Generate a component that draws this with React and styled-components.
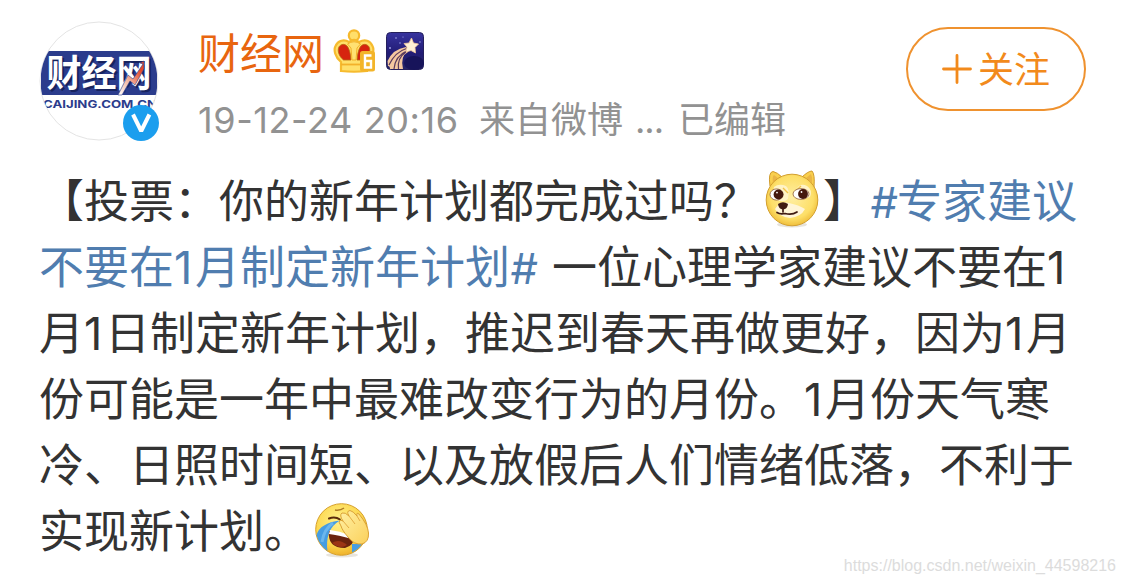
import React from 'react';
import styled, { createGlobalStyle } from 'styled-components';

const GlobalStyle = createGlobalStyle`
  body {
    margin: 0;
    background: #fff;
    font-family: Inter, "Noto Sans CJK SC", sans-serif;
    text-spacing-trim: space-all;
  }
`;

const Avatar = () => (
  <AvatarSvg viewBox="0 0 120 120">
    <defs>
      <clipPath id="face"><circle cx="60" cy="60" r="58.5" /></clipPath>
      <linearGradient id="bolt" x1="0" y1="1" x2="1" y2="0">
        <stop offset="0" stopColor="#fff" />
        <stop offset="0.4" stopColor="#f3b7a2" />
        <stop offset="0.8" stopColor="#e2492c" />
      </linearGradient>
    </defs>
    <circle cx="60" cy="60" r="59" fill="#fff" stroke="#e4e4e4" />
    <g clipPath="url(#face)">
      <rect x="2" y="30" width="116" height="44" fill="#2b3c8c" />
      <text x="9.5" y="68" fontSize="37" fontWeight="700" fill="#17235e" textLength="105" lengthAdjust="spacingAndGlyphs">财经网</text>
      <text x="7.5" y="66" fontSize="37" fontWeight="700" fill="#fff" textLength="105" lengthAdjust="spacingAndGlyphs">财经网</text>
      <path d="M79 74 L89 54 L94 58 L104 43 L101 42 L105 40 L105 48 L96 64 L91 60 L83 74 Z" fill="url(#bolt)" stroke="#2b3c8c" strokeWidth="0.6" />
      <text x="4" y="86.5" fontSize="10.5" fontWeight="700" fill="#2b3c8c" textLength="114" lengthAdjust="spacingAndGlyphs">CAIJING.COM.CN</text>
    </g>
  </AvatarSvg>
);

const Verified = () => (
  <VerifiedSvg viewBox="0 0 36 36">
    <circle cx="18" cy="18" r="18" fill="#1b9eee" />
    <path d="M10 9.5 L18.2 26 L26.4 9.5" fill="none" stroke="#fff" strokeWidth="4" strokeLinejoin="bevel" />
  </VerifiedSvg>
);

const Crown = () => (
  <CrownSvg viewBox="0 0 42 44">
    <circle cx="21" cy="6.5" r="5.2" fill="#ffdf6a" stroke="#f6b92c" strokeWidth="2.2" />
    <path d="M8 42 L8 33 C2 28 0.5 21 2.5 17 C5 11.5 11 10 16 13 Q21 9 26 13 C32 10 37 11.5 39.5 17 C41.5 21 40 28 34 33 L34 42 Q21 43.5 8 42 Z" fill="#ffe06a" stroke="#f6bb2e" strokeWidth="2.2" />
    <path d="M10.5 31 C4 26 3.5 17 9 15.5 C14 14.5 17 19 18 31 Z" fill="#d6240f" stroke="#b8690f" strokeWidth="0.8" />
    <path d="M31.5 31 C38 26 38.5 17 33 15.5 C28 14.5 25 19 24 31 Z" fill="#d6240f" stroke="#b8690f" strokeWidth="0.8" />
    <path d="M14.5 15 Q21 10.5 27.5 15 L24 19 L23 31 H19 L18 19 Z" fill="#ffe172" stroke="#f3b12a" />
    <path d="M8 35.5 H28" fill="none" stroke="#f3b12a" strokeWidth="1.8" />
    <rect x="27" y="22" width="15" height="20.5" rx="2.5" fill="#f3b52a" />
    <path d="M38.5 26.5 H32 V38.5 H38 V32 H32" fill="none" stroke="#fff" strokeWidth="2.4" />
  </CrownSvg>
);

const StarBadge = () => (
  <StarSvg viewBox="0 0 38 38">
    <defs>
      <linearGradient id="night" x1="0" y1="0" x2="0" y2="1">
        <stop offset="0" stopColor="#38349f" />
        <stop offset="0.55" stopColor="#221c75" />
        <stop offset="1" stopColor="#252565" />
      </linearGradient>
    </defs>
    <rect x="0.5" y="0.5" width="37" height="37" rx="4" fill="url(#night)" stroke="#25205c" />
    <ellipse cx="28" cy="31" rx="10" ry="7" fill="#17145a" />
    <path d="M1.5 29 Q7 17 20 15 L22 20 Q14 24 17 37 H4 Q4 34 2 34 Z" fill="#f4c8a0" />
    <path d="M3 33 Q9 20 20.5 16.5 M8 37 Q9 24 21.5 18.5 M12.5 37 Q11 26 20 20" fill="none" stroke="#5a3a5c" strokeWidth="1.2" />
    <path d="M25.5 6 L27.5 11 L32.5 12 L29 15.5 L29.5 21 L25 18.5 L20 20 L21 15 L18 11.5 L23 11 Z" fill="#fff0d4" stroke="#f4c89c" strokeWidth="0.8" />
    <g fill="#aaaef0">
      <circle cx="10" cy="6" r="0.8" />
      <circle cx="17" cy="5" r="0.6" />
      <circle cx="4" cy="16" r="0.9" />
      <circle cx="14" cy="11" r="0.7" />
      <circle cx="34" cy="10" r="0.7" />
    </g>
  </StarSvg>
);

const Doge = () => (
  <Emoji viewBox="0 0 54 58" $top={-7}>
    <defs>
      <radialGradient id="fur" cx="0.5" cy="0.45" r="0.55">
        <stop offset="0" stopColor="#ffeea2" />
        <stop offset="0.75" stopColor="#fddf68" />
        <stop offset="1" stopColor="#f0bf3c" />
      </radialGradient>
    </defs>
    <ellipse cx="27" cy="54.5" rx="15" ry="3" fill="#e6e3dc" />
    <path d="M5 16 Q3 2 8 1.5 Q12 2 18 8 Z M36 8 Q43 1 47 1 Q50 4 49 17 Z" fill="#f9cf4d" stroke="#cf9a2c" />
    <path d="M8 13 Q7 6 9 5 L14 9 Z M41 8 L46 4 Q48 8 47 13 Z" fill="#eab545" />
    <circle cx="27" cy="30" r="25.8" fill="url(#fur)" stroke="#d3a02e" />
    <path d="M9 17 Q14 13 21 16 Q25 19 23 29 Q18 34 8 28 Z M31 20 Q35 12 42 16 Q48 20 45 27 Q36 31 30 26 Z" fill="#fff3c5" />
    <path d="M10 39 Q15 31 24 33 Q34 35 40 39 Q36 47 25 48 Q14 47 10 39" fill="#fff5d8" />
    <path d="M18 18 L23 23 M30 22 L36 16" stroke="#f1c24a" strokeWidth="1.4" fill="none" />
    <ellipse cx="11.5" cy="24.5" rx="6.5" ry="5.6" fill="#fff" stroke="#8b5a35" strokeWidth="0.8" />
    <ellipse cx="36" cy="24" rx="8" ry="5.4" fill="#fff" stroke="#8b5a35" strokeWidth="0.8" />
    <circle cx="13.5" cy="24.5" r="4.9" fill="#45190e" />
    <circle cx="38" cy="24" r="4.9" fill="#45190e" />
    <circle cx="12" cy="22.6" r="0.9" fill="#fff" />
    <circle cx="36.5" cy="22" r="0.9" fill="#fff" />
    <path d="M13 34 Q18 30.5 23 34 Q22.5 39 18 39.5 Q13.5 39 13 34" fill="#401b12" />
    <path d="M18 38 V42 M12 42.5 Q15 44.5 20 43.5 Q27 45.5 32 42" fill="none" stroke="#401b12" strokeWidth="1.7" strokeLinecap="round" />
  </Emoji>
);

const Facepalm = () => (
  <Emoji viewBox="0 0 54 58" $top={-3}>
    <defs>
      <radialGradient id="skin" cx="0.45" cy="0.35" r="0.65">
        <stop offset="0" stopColor="#fff08a" />
        <stop offset="0.7" stopColor="#fcd74e" />
        <stop offset="1" stopColor="#efb22c" />
      </radialGradient>
      <linearGradient id="palm" x1="0" y1="0" x2="1" y2="1">
        <stop offset="0" stopColor="#fff0a4" />
        <stop offset="1" stopColor="#fbd05a" />
      </linearGradient>
    </defs>
    <ellipse cx="27" cy="53" rx="16" ry="2.5" fill="#e8e5de" />
    <circle cx="26.5" cy="27.5" r="25.8" fill="url(#skin)" stroke="#d6a02b" />
    <path d="M14 16.5 Q20 14 25 17.5" fill="none" stroke="#5b2b0c" strokeWidth="2" strokeLinecap="round" />
    <path d="M20 8 Q25 9 29 6" fill="none" stroke="#b07d25" strokeWidth="1.5" />
    <path d="M25 18.5 Q17 23 14 31 Q11 40 12.5 49 Q4 43 1.5 33 Q5 21 25 18.5" fill="#469de2" />
    <path d="M18 21 Q9 27 7 40" fill="none" stroke="#6bb6ec" strokeWidth="3" />
    <path d="M37 42 L47 42 Q44 47 37 50.5 Z" fill="#469de2" />
    <path d="M14 29 Q23 32 38 35 Q40 43 30 46 Q12 46 14 29" fill="#6a240e" />
    <path d="M15 28 Q25 29 34 33 L37 37 Q23 33 14 32 Z" fill="#fff" />
    <path d="M17 41 Q24 36 32 43 Q25 48 17 41" fill="#9b3515" />
    <path d="M26 24 Q23 20 25 18 L28 19 Q24 13 27 11 Q30 10 34 14 Q31 9 35 8.5 Q38 9 42 14 Q41 10 44 12 Q53 23 53.5 31 Q54 40 47 42 Q39 43 33 35 Q27 28 26 24 Z" fill="url(#palm)" stroke="#dba236" strokeWidth="1" />
    <path d="M28 19 L34 26 M34 14 L40 22 M42 14 L45 19" fill="none" stroke="#e3ac44" />
  </Emoji>
);

const App = () => (
  <Card>
    <GlobalStyle />
    <Header>
      <AvatarWrap>
        <Avatar />
        <Verified />
      </AvatarWrap>
      <Info>
        <NameRow>
          <Name>财经网</Name>
          <Crown />
          <StarBadge />
        </NameRow>
        <Meta>
          <Time>19-12-24 20:16</Time>
          <Source>来自微博</Source>
          <Dots>...</Dots>
          <Edited>已编辑</Edited>
        </Meta>
      </Info>
      <Follow>
        <svg width="30" height="30" viewBox="0 0 30 30">
          <path d="M15 1.5 V28.5 M1.5 15 H28.5" stroke="#f28a1c" strokeWidth="2.8" strokeLinecap="round" />
        </svg>
        <FollowText>关注</FollowText>
      </Follow>
    </Header>
    <Post>
      <Line>【投票：你的新年计划都完成过吗？<Doge />】<Topic $left={2}><Hash>#</Hash>专家建议</Topic></Line>
      <Line><Topic>不要在<Num>1</Num>月制定新年计划<Hash>#</Hash></Topic><Rest>一位心理学家建议不要在<Num>1</Num></Rest></Line>
      <Line>月<Num>1</Num>日制定新年计划，推迟到春天再做更好，因为<Num>1</Num>月</Line>
      <Line>份可能是一年中最难改变行为的月份。<Num>1</Num>月份天气寒</Line>
      <Line>冷、日照时间短、以及放假后人们情绪低落，不利于</Line>
      <Line>实现新计划。<Facepalm /></Line>
    </Post>
    <Watermark>https://blog.csdn.net/weixin_44598216</Watermark>
  </Card>
);

const Card = styled.div`
  position: relative;
  box-sizing: border-box;
  width: 1125px;
  height: 585px;
  padding: 21px 39px 0;
  overflow: hidden;
  background: #fff;
`;

const Header = styled.div`
  display: flex;
  height: 148px;
`;

const AvatarWrap = styled.div`
  position: relative;
  width: 120px;
  height: 120px;
`;

const AvatarSvg = styled.svg`
  display: block;
  width: 120px;
  height: 120px;
`;

const VerifiedSvg = styled.svg`
  position: absolute;
  right: 0;
  bottom: 0;
  width: 36px;
  height: 36px;
`;

const Info = styled.div`
  flex: 1;
  margin-left: 39px;
`;

const NameRow = styled.div`
  display: flex;
  align-items: center;
  height: 60px;
`;

const Name = styled.div`
  padding-top: 5px;
  font-size: 42px;
  line-height: 60px;
  color: #e8650f;
`;

const CrownSvg = styled.svg`
  width: 42px;
  height: 44px;
  margin-left: 9px;
`;

const StarSvg = styled.svg`
  width: 38px;
  height: 38px;
  margin-left: 11px;
`;

const Meta = styled.div`
  display: flex;
  height: 50px;
  margin-top: 14px;
  font-size: 36px;
  line-height: 50px;
  color: #929292;
  white-space: nowrap;
`;

const Time = styled.div`
  width: 281px;
  letter-spacing: 0.6px;
`;

const Source = styled.div`
  width: 156px;
`;

const Dots = styled.div`
  width: 43px;
  letter-spacing: -1px;
`;

const Edited = styled.div``;

const Follow = styled.div`
  display: flex;
  box-sizing: border-box;
  align-items: center;
  justify-content: center;
  gap: 6px;
  width: 180px;
  height: 84px;
  margin-top: 6px;
  border: 2px solid #ef922f;
  border-radius: 42px;
  color: #f28a1c;
  font-size: 36px;
`;

const FollowText = styled.span`
  padding-bottom: 5px;
`;

const Post = styled.div`
  color: #333;
  font-size: 45px;
`;

const Line = styled.div`
  display: flex;
  align-items: center;
  height: 66px;
  line-height: 66px;
  white-space: nowrap;
`;

const Topic = styled.span`
  margin-left: ${props => props.$left || 0}px;
  color: #507daf;
`;

const Rest = styled.span`
  margin-left: 15px;
`;

const Num = styled.span`
  display: inline-block;
  width: 21px;
`;

const Hash = styled.span`
  display: inline-block;
  width: 27px;
  font-size: 43px;
  font-style: italic;
`;

const Emoji = styled.svg`
  flex-shrink: 0;
  width: 54px;
  height: 58px;
  margin: ${props => props.$top}px 4px 0 6px;
`;

const Watermark = styled.div`
  position: absolute;
  right: 9px;
  bottom: 9px;
  color: #dcdcdc;
  font: 16px/20px "Liberation Sans", sans-serif;
`;

export default App;
